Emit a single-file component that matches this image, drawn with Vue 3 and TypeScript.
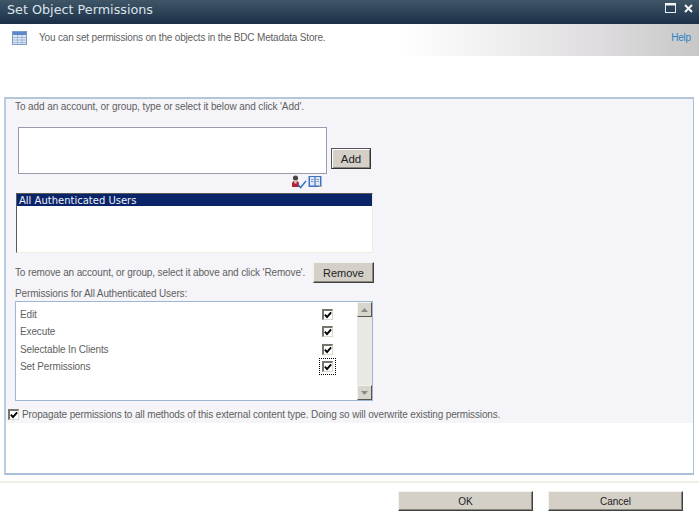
<script setup lang="ts">
const permissions: { name: string; focused?: boolean }[] = [
  { name: 'Edit' },
  { name: 'Execute' },
  { name: 'Selectable In Clients' },
  { name: 'Set Permissions', focused: true },
]
</script>

<template>
  <div class="dialog">
    <header class="titlebar">
      <span class="title">Set Object Permissions</span>
      <svg class="win-max" width="11" height="10" viewBox="0 0 11 10">
        <rect x="0.5" y="0.5" width="10" height="9" fill="#2a4259" stroke="#e6ebef" />
        <rect x="0" y="0" width="11" height="2.5" fill="#f2f4f6" />
      </svg>
      <svg class="win-close" width="9" height="9" viewBox="0 0 9 9">
        <path d="M1 1l7 7M8 1L1 8" stroke="#f4f6f8" stroke-width="2" />
      </svg>
    </header>

    <div class="intro">
      <svg class="table-icon" width="15" height="15" viewBox="0 0 15 15">
        <rect x="0.5" y="1.5" width="14" height="13" fill="#dfe8f4" stroke="#7f9cc6" />
        <rect x="1" y="2" width="13" height="3" fill="#5f86c8" />
        <path d="M1 7.5h13M1 10h13M1 12.5h13M5.5 5v9M10 5v9" stroke="#a3b7d6" />
      </svg>
      <span class="intro-text">You can set permissions on the objects in the BDC Metadata Store.</span>
      <a class="help">Help</a>
    </div>

    <main class="panel">
      <section class="form">
        <p class="hint first">To add an account, or group, type or select it below and click 'Add'.</p>

        <div class="add-row">
          <textarea class="people"></textarea>
          <button class="btn small">Add</button>
        </div>

        <div class="picker-icons">
          <svg width="16" height="14" viewBox="0 0 16 14">
            <circle cx="4.5" cy="3" r="2.6" fill="#4f4442" />
            <path d="M1 12V8.5C1 6.8 2.4 6 4.5 6S8 6.8 8 8.5V12z" fill="#b3222e" />
            <rect x="3.4" y="5.5" width="2.2" height="3" fill="#d8d4d0" />
            <path d="M7 9.5l2.6 3L15 6" fill="none" stroke="#3a78c8" stroke-width="1.6" />
          </svg>
          <svg width="14" height="13" viewBox="0 0 14 13">
            <rect x="0.5" y="1" width="13" height="11" fill="#3f74c4" />
            <path d="M2 2h4.4v8.5H2zM7.6 2H12v8.5H7.6z" fill="#dfe8f4" />
            <path d="M3 4.5h2.5M3 6.5h2.5M8.5 4.5H11M8.5 6.5H11" stroke="#7f9cc6" />
            <path d="M11 11.5h2.5" stroke="#d9a13a" />
          </svg>
        </div>

        <div class="listbox">
          <div class="selected">All Authenticated Users</div>
        </div>

        <div class="remove-row">
          <span class="hint">To remove an account, or group, select it above and click 'Remove'.</span>
          <button class="btn remove">Remove</button>
        </div>

        <p class="hint perm-label">Permissions for All Authenticated Users:</p>

        <div class="perm-box">
          <ul class="perm-list">
            <li v-for="p in permissions" :key="p.name" class="perm-row">
              <span>{{ p.name }}</span>
              <span class="check" :class="{ focused: p.focused }">
                <svg width="8" height="8" viewBox="0 0 9 9"><path d="M1 4l2.4 2.8L8 1.5" fill="none" stroke="#000" stroke-width="2.2" /></svg>
              </span>
            </li>
          </ul>
          <div class="scrollbar">
            <span class="arrow"><svg width="7" height="4" viewBox="0 0 7 4"><path d="M3.5 0L7 4H0z" fill="#8a8a84" /></svg></span>
            <span class="arrow"><svg width="7" height="4" viewBox="0 0 7 4"><path d="M0 0h7L3.5 4z" fill="#8a8a84" /></svg></span>
          </div>
        </div>

        <div class="propagate">
          <span class="check">
            <svg width="8" height="8" viewBox="0 0 9 9"><path d="M1 4l2.4 2.8L8 1.5" fill="none" stroke="#000" stroke-width="2.2" /></svg>
          </span>
          <span>Propagate permissions to all methods of this external content type. Doing so will overwrite existing permissions.</span>
        </div>
      </section>
    </main>

    <footer class="footer">
      <button class="btn wide">OK</button>
      <button class="btn wide">Cancel</button>
    </footer>
  </div>
</template>

<style scoped>
.dialog {
  width: 699px;
  height: 518px;
  display: flex;
  flex-direction: column;
  background: #fff;
  overflow: hidden;
  font-family: "Liberation Sans", Arial, sans-serif;
  font-size: 10px;
  letter-spacing: -0.13px;
  color: #5f5f5f;
}
.titlebar {
  height: 24px;
  flex: none;
  box-sizing: border-box;
  display: flex;
  align-items: center;
  padding: 0 6px 5px 7px;
  background: linear-gradient(#3f5668, #1b3048);
}
.title {
  font-family: "DejaVu Sans", sans-serif;
  font-size: 12.75px;
  letter-spacing: 0;
  color: #dde4ea;
  flex: 1;
}
.win-max { margin: 0 8px 3px 0; }
.win-close { margin-bottom: 3px; }
.intro {
  height: 32px;
  flex: none;
  box-sizing: border-box;
  display: flex;
  align-items: center;
  padding: 0 8px 6px 12px;
  background: linear-gradient(90deg, #fff 0, #fff 57%, #f2f1f2 70%, #dfdddf 85%, #c8c7c8 100%);
}
.table-icon { flex: none; margin-right: 12px; }
.intro-text { flex: 1; letter-spacing: -0.18px; }
.help { color: #2c80c4; letter-spacing: -0.2px; }
.panel {
  margin: 41px 5px 0 4px;
  height: 378px;
  flex: none;
  border: 1px solid #a9c0d8;
  border-top: 2px solid #b4c6d8;
  border-left: 2px solid #b9cde0;
  border-bottom: 2px solid #a9c0d8;
  box-sizing: border-box;
  display: flex;
  flex-direction: column;
}
.form {
  background: #f5f4f8;
  height: 324px;
  display: flex;
  flex-direction: column;
}
.hint { margin: 0; white-space: nowrap; }
.first {
  height: 16px;
  line-height: 16px;
  padding-left: 9px;
  letter-spacing: -0.09px;
}
.add-row {
  display: flex;
  align-items: flex-end;
  margin: 12px 0 0 12px;
}
.people {
  width: 309px;
  height: 47px;
  box-sizing: border-box;
  border: 1px solid #9a9ab0;
  background: #fff;
  resize: none;
  margin: 0 4px 0 0;
  padding: 0;
  display: block;
}
.btn {
  flex: none;
  box-sizing: border-box;
  background: #d4d0c8;
  border: 1px solid;
  border-color: #f4f3ee #404040 #404040 #f4f3ee;
  box-shadow: inset -1px -1px 0 #8a877e;
  font-family: "Liberation Sans", Arial, sans-serif;
  letter-spacing: 0;
  color: #222;
  padding: 0;
}
.small {
  width: 40px;
  height: 21px;
  font-size: 11.5px;
  margin-bottom: 5px;
  border-color: #555 #333 #333 #555;
  box-shadow: inset 1px 1px 0 #fff, inset -1px -1px 0 #8a877e;
}
.picker-icons {
  height: 14px;
  margin: 1px 0 0 285px;
  display: flex;
  align-items: flex-start;
  gap: 1px;
}
.listbox {
  width: 357px;
  height: 60px;
  box-sizing: border-box;
  margin: 4px 0 0 10px;
  background: #fff;
  border: 1px solid;
  border-color: #5c5a52 #ecebe4 #ecebe4 #5c5a52;
}
.selected {
  height: 12px;
  line-height: 14px;
  padding-left: 2px;
  background: #0a246a;
  color: #eef1f8;
  font-family: "DejaVu Sans", sans-serif;
  font-size: 10px;
  letter-spacing: 0;
}
.remove-row {
  display: flex;
  align-items: center;
  justify-content: space-between;
  width: 359px;
  height: 21px;
  margin: 9px 0 0 9px;
}
.remove {
  width: 61px;
  height: 21px;
  font-size: 11px;
}
.perm-label {
  height: 14px;
  line-height: 14px;
  margin: 4px 0 0 9px;
}
.perm-box {
  width: 358px;
  height: 100px;
  box-sizing: border-box;
  margin-left: 9px;
  border: 1px solid #9db6d2;
  background: #fff;
  display: flex;
}
.perm-list {
  flex: 1;
  list-style: none;
  margin: 0;
  padding: 4px 24px 0 4px;
}
.perm-row {
  height: 17.33px;
  display: flex;
  align-items: center;
  justify-content: space-between;
}
.check {
  width: 11px;
  height: 11px;
  box-sizing: border-box;
  display: inline-flex;
  align-items: center;
  justify-content: center;
  background: #fff;
  border-style: solid;
  border-width: 2px 1px 1px 2px;
  border-color: #77756b #dcd9cc #dcd9cc #77756b;
  flex: none;
}
.focused {
  outline: 1px dotted #000;
  outline-offset: 2px;
}
.scrollbar {
  width: 15px;
  background: #e9e8e4;
  display: flex;
  flex-direction: column;
  justify-content: space-between;
}
.arrow {
  height: 15px;
  display: flex;
  align-items: center;
  justify-content: center;
  background: #d8d5cd;
  border: 1px solid;
  border-color: #f4f3ee #555 #555 #f4f3ee;
  box-sizing: border-box;
}
.propagate {
  height: 16px;
  margin: 5px 0 0 2px;
  display: flex;
  align-items: center;
  gap: 3px;
}
.footer {
  flex: none;
  margin-top: 6px;
  height: 36px;
  border-top: 2px solid #efeee6;
  box-sizing: border-box;
  padding: 8px 16px 0 0;
  display: flex;
  justify-content: flex-end;
  align-items: flex-start;
  gap: 15px;
}
.wide {
  width: 135px;
  height: 20px;
  font-size: 10px;
}
</style>

<style>
html, body { margin: 0; background: #fff; }
</style>
